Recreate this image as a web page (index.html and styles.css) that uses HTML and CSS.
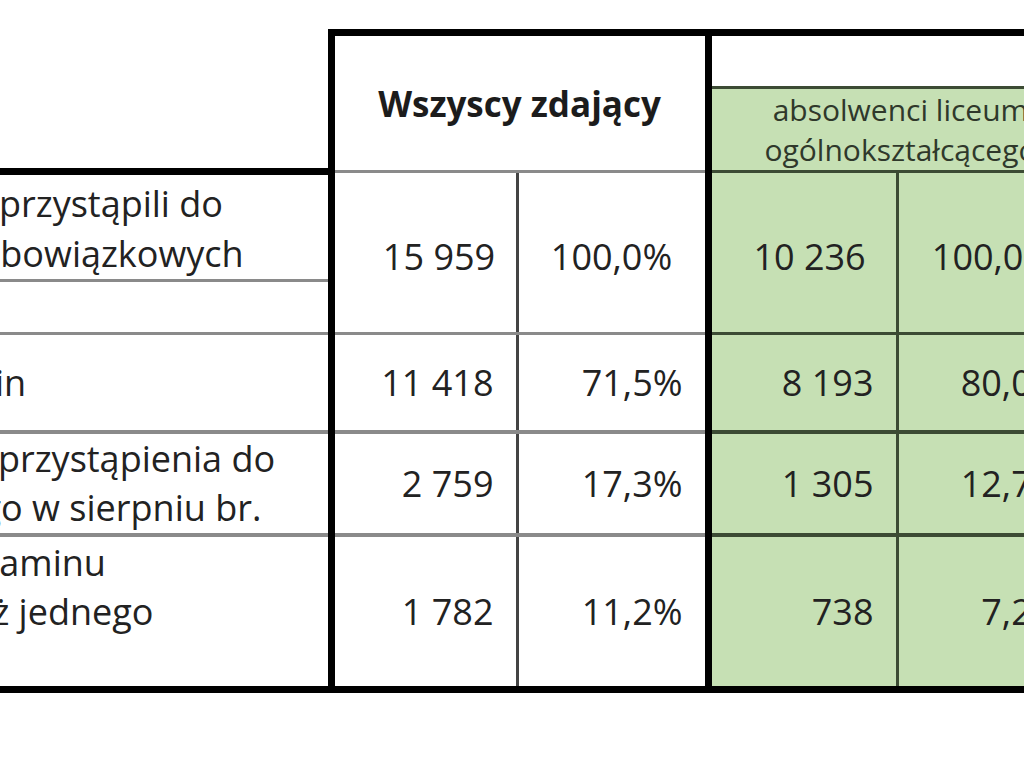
FILE: index.html
```html
<!DOCTYPE html>
<html lang="pl">
<head>
<meta charset="utf-8">
<title>Wyniki egzaminu</title>
<link rel="stylesheet" href="styles.css">
</head>
<body>
<table class="grid">
  <colgroup>
    <col class="c-label">
    <col class="c-a">
    <col class="c-b">
    <col class="c-c">
    <col class="c-d">
  </colgroup>
  <thead>
    <tr class="h1">
      <th class="corner" rowspan="2"></th>
      <th class="all" colspan="2" rowspan="2">Wszyscy zdający</th>
      <th class="group" colspan="2"></th>
    </tr>
    <tr class="h2">
      <th class="sub" colspan="2"><span class="sub-text">absolwenci liceum ogólnokształcącego</span></th>
    </tr>
  </thead>
  <tbody>
    <tr class="r1a">
      <td class="label first">Liczba zdających, którzy przystąpili do<br>wszystkich egzaminów obowiązkowych</td>
      <td class="num a r1n" rowspan="2">15&nbsp;959</td>
      <td class="num b r1n" rowspan="2">100,0%</td>
      <td class="num c r1n" rowspan="2">10&nbsp;236</td>
      <td class="num d r1n" rowspan="2">100,0%</td>
    </tr>
    <tr class="r1b">
      <td class="label"></td>
    </tr>
    <tr class="r2">
      <td class="label passed">Absolwenci zdali egzamin</td>
      <td class="num a">11&nbsp;418</td>
      <td class="num b">71,5%</td>
      <td class="num c">8&nbsp;193</td>
      <td class="num d">80,0%</td>
    </tr>
    <tr class="r3">
      <td class="label">Absolwenci mają prawo przystąpienia do<br>egzaminu poprawkowego w sierpniu br.</td>
      <td class="num a">2&nbsp;759</td>
      <td class="num b">17,3%</td>
      <td class="num c">1&nbsp;305</td>
      <td class="num d">12,7%</td>
    </tr>
    <tr class="r4">
      <td class="label failed">Absolwenci nie zdali egzaminu<br>maturalnego z więcej niż jednego<br>przedmiotu</td>
      <td class="num a">1&nbsp;782</td>
      <td class="num b">11,2%</td>
      <td class="num c">738</td>
      <td class="num d">7,2%</td>
    </tr>
  </tbody>
</table>
</body>
</html>
```
FILE: styles.css
```css
html, body {
  margin: 0;
  padding: 0;
  background: #ffffff;
  overflow: hidden;
  height: 768px;
}

body {
  font-family: "Open Sans", "Liberation Sans", sans-serif;
  color: #222222;
}

.grid {
  border-collapse: collapse;
  table-layout: fixed;
  width: 1520px;
  margin: 29px 0 0 -416px;
  font-size: 36px;
}

.c-label { width: 747px; }
.c-a { width: 186px; }
.c-b { width: 191px; }
.c-c { width: 189px; }
.c-d { width: 207px; }

th, td {
  padding: 0;
}

.h1 { height: 55px; }
.h2 { height: 84px; }
.r1a { height: 109px; }
.r1b { height: 53px; }
.r2 { height: 98px; }
.r3 { height: 103px; }
.r4 { height: 155px; }

.corner {
  border-right: 7px solid #000;
  border-bottom: 7px solid #000;
}

.all {
  border-top: 7px solid #000;
  border-right: 7px solid #000;
  border-bottom: 3px solid #8a8a8a;
  font-size: 35px;
  font-weight: 700;
  color: #1c1c1c;
  text-align: center;
  vertical-align: middle;
}

.group {
  border-top: 7px solid #000;
  border-bottom: 3px solid #3c4b34;
  background: #ffffff;
}

.sub {
  background: #c6e0b4;
  border-bottom: 3px solid #3c4b34;
  font-size: 30px;
  font-weight: 400;
  line-height: 40px;
  color: #2f382b;
  text-align: left;
  vertical-align: middle;
  padding-left: 44px;
  white-space: nowrap;
}

.sub-text {
  display: inline-block;
  width: 290px;
  text-align: center;
  white-space: normal;
}

.label {
  padding-left: 8px;
  text-align: left;
  white-space: nowrap;
  overflow: hidden;
  line-height: 49px;
  vertical-align: middle;
  border-right: 7px solid #000;
  border-bottom: 3px solid #8a8a8a;
}

.label.first {
  line-height: 50px;
  padding-top: 4px;
  vertical-align: top;
}

.label.passed { padding-left: 16px; }
.label.failed { padding-left: 13px; }

.num {
  text-align: right;
  padding-right: 22px;
  vertical-align: middle;
  white-space: nowrap;
  border-bottom: 3px solid #8a8a8a;
}

.a { border-right: 3px solid #444; }
.b { border-right: 7px solid #000; }

.c, .d {
  background: #c6e0b4;
  border-right: 3px solid #3c4b34;
  border-bottom-color: #3c4b34;
}

.d { padding-right: 41px; }

.r1n {
  text-align: center;
  padding-right: 0;
  padding-top: 8px;
}
.a.r1n { padding-left: 28px; }
.c.r1n { padding-left: 12px; }
.d.r1n { padding-right: 16px; }

.r2 td, .r3 td {
  border-bottom-width: 4px;
}

.r4 td {
  border-bottom: 7px solid #000;
}
```
